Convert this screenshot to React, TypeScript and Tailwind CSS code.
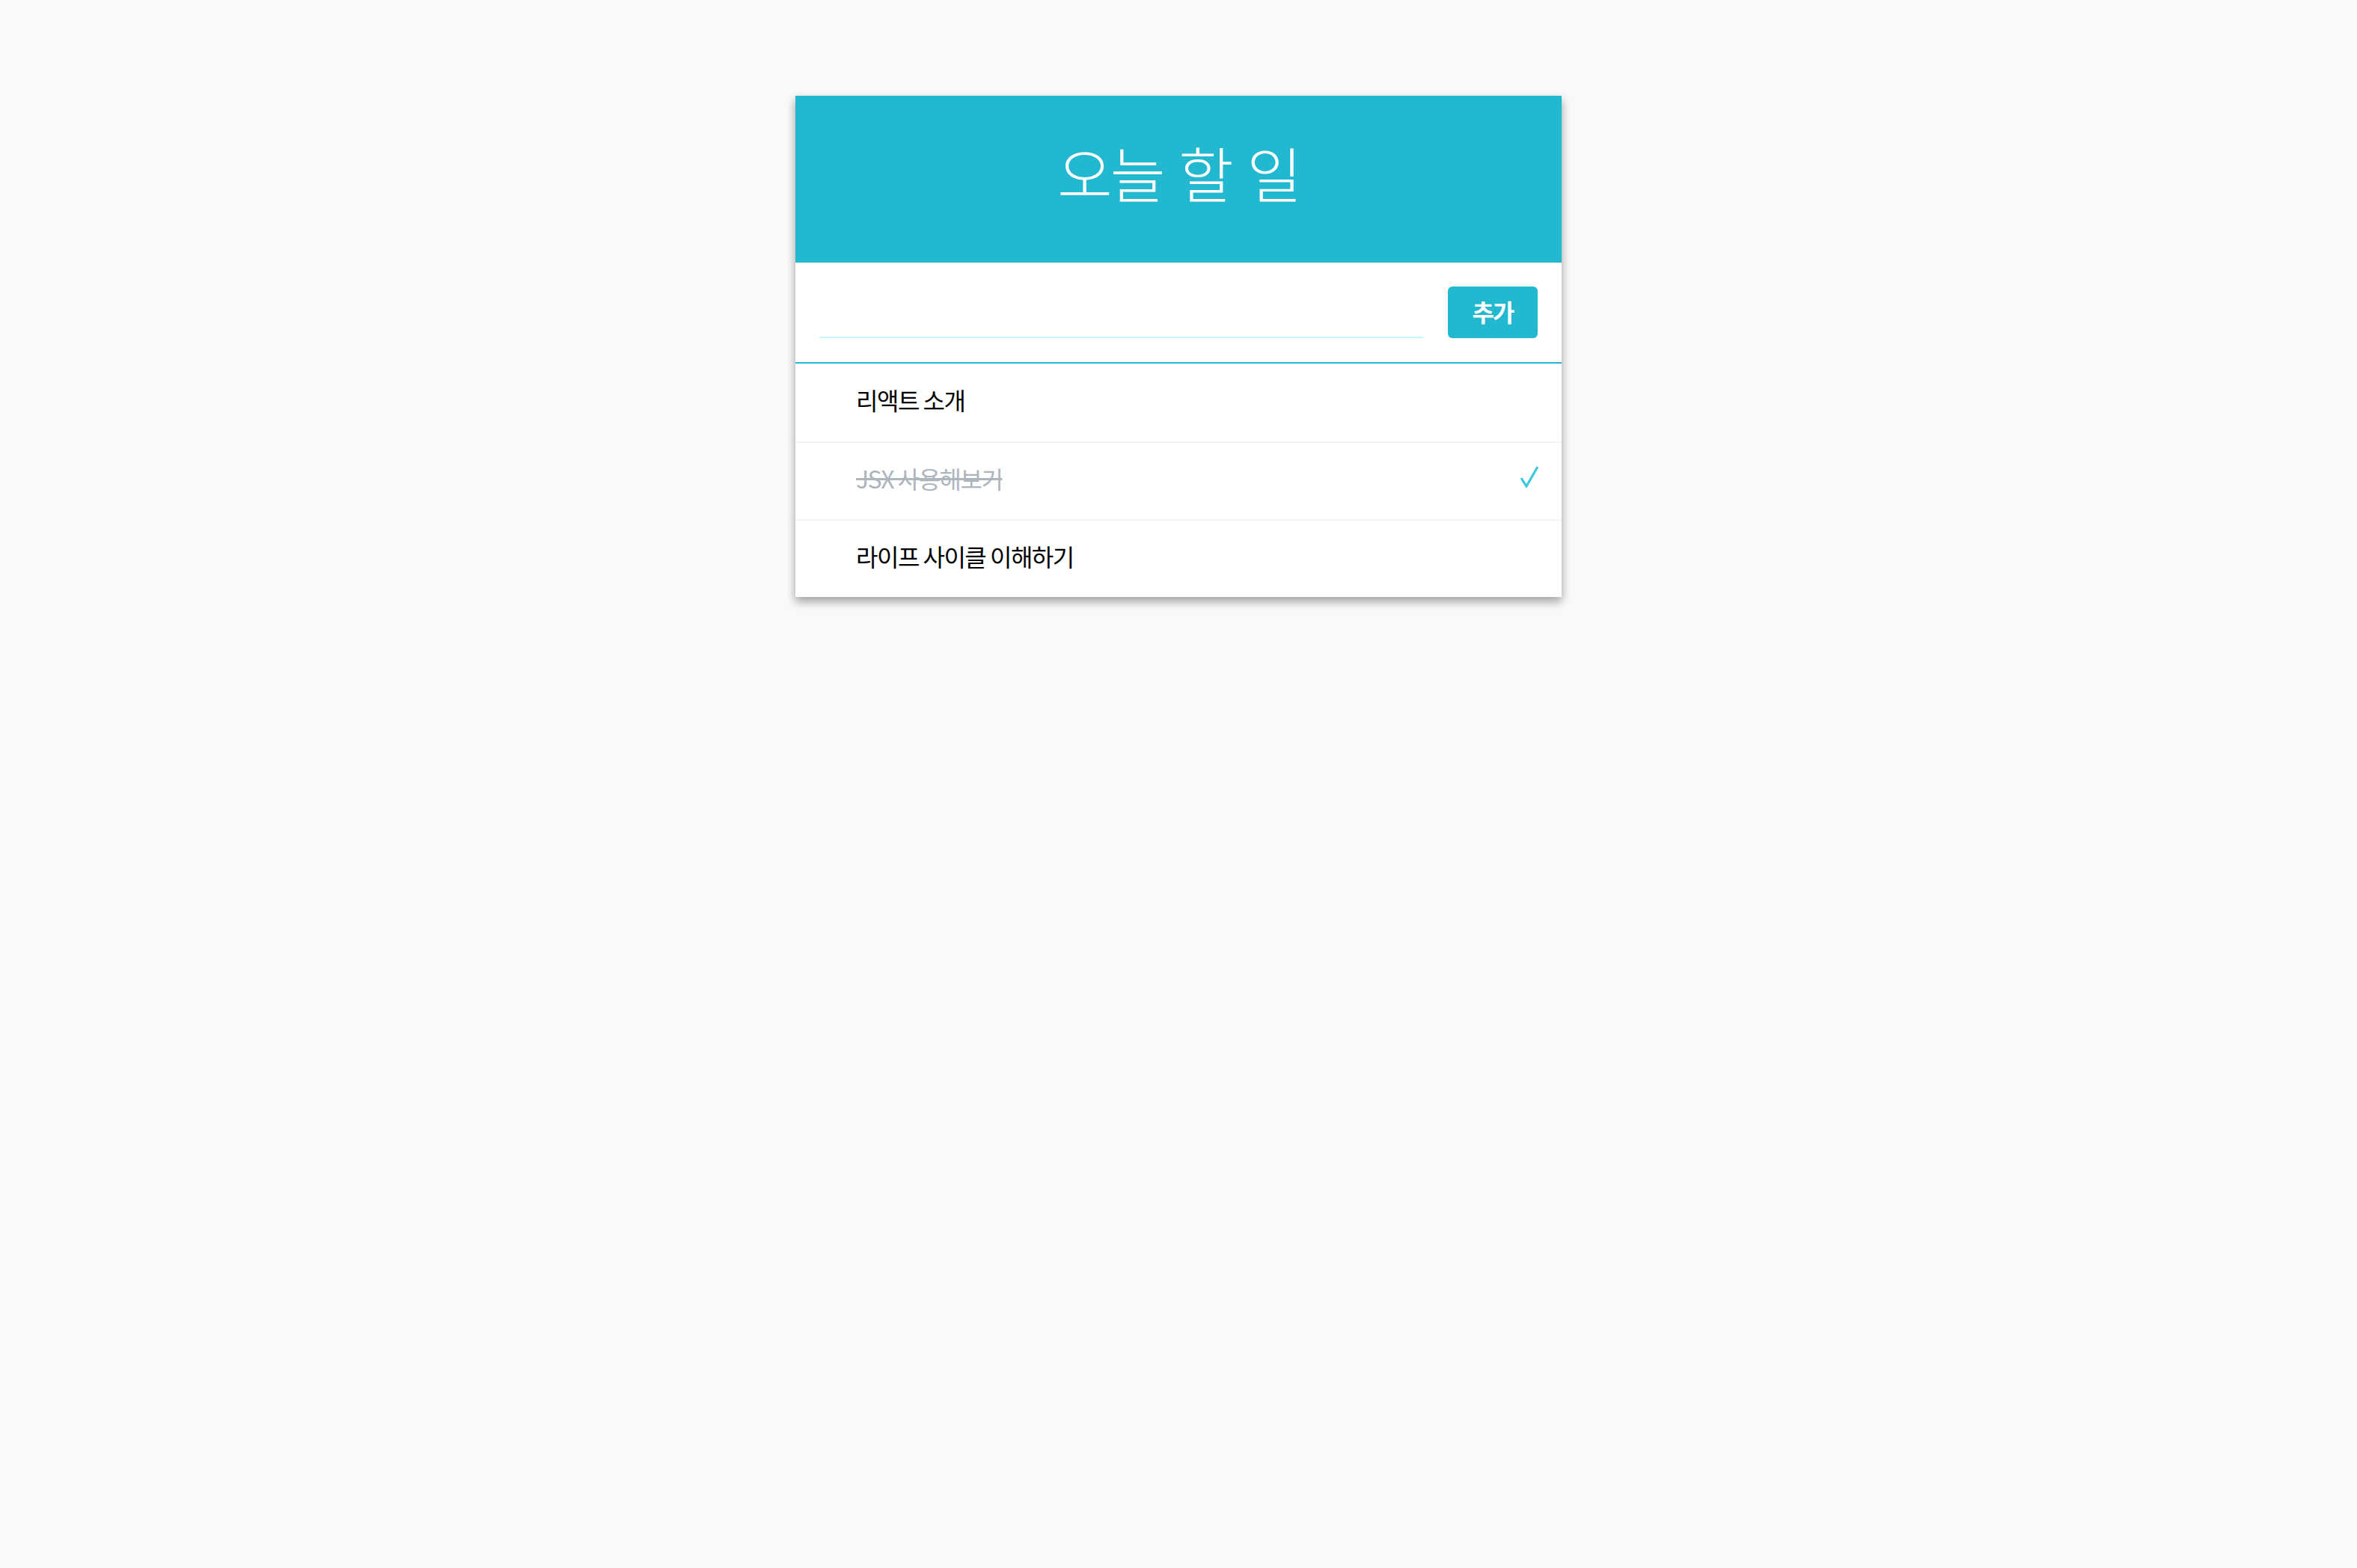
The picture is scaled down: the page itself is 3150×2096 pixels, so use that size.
import React from "react";

const font = { fontFamily: '"Noto Sans CJK KR", "Noto Sans", sans-serif' };

function Check() {
  return (
    <svg width="26" height="30" viewBox="0 0 26 30" className="block">
      <polyline points="2,17 9,28 24,2" fill="none" stroke="#3bc9db" strokeWidth="3.2" strokeLinejoin="miter" />
    </svg>
  );
}

const todos = [
  { text: "리액트 소개", checked: false },
  { text: "JSX 사용해보기", checked: true },
  { text: "라이프 사이클 이해하기", checked: false },
];

export default function App() {
  return (
    <div className="min-h-[2096px] w-full bg-[#f9f9f9] pt-[128px]" style={font}>
      <div className="mx-auto w-[1024px] bg-white shadow-[0_6px_12px_rgba(0,0,0,0.16),0_6px_12px_rgba(0,0,0,0.23)]">
        <div className="bg-[#22b8cf] px-[64px] pt-[54px] pb-[74px] text-center text-[80px] leading-[95px] font-light text-white tracking-[-3px] [word-spacing:6px]">
          오늘 할 일
        </div>
        <div className="border-b-2 border-[#22b8cf] p-[32px]">
          <div className="flex">
            <input className="min-w-0 flex-1 border-b-2 border-[#c5f6fa] text-[40px] outline-none" />
            <div className="ml-[32px] flex h-[69px] w-[120px] items-center justify-center rounded-[6px] bg-[#22b8cf] pb-[4px] text-[32px] font-semibold text-white tracking-[-2px]">
              추가
            </div>
          </div>
        </div>
        <div>
          {todos.map((t, i) => (
            <div
              key={i}
              className={`flex h-[104px] items-center px-[32px] pb-[8px] ${i > 0 ? "border-t-2 border-[#f1f3f5]" : ""}`}
            >
              <div className="mr-[32px] w-[17px] text-[32px] leading-[38px] font-semibold text-[#e64980] opacity-0">×</div>
              <div
                className={`flex-1 text-[32px] leading-[38px] tracking-[-1.5px] ${
                  t.checked ? "text-[#adb5bd] line-through" : "text-black"
                }`}
              >
                {t.text}
              </div>
              {t.checked && (
                <div className="ml-[32px] -mr-[2px] -mt-[4px]">
                  <Check />
                </div>
              )}
            </div>
          ))}
        </div>
      </div>
    </div>
  );
}
